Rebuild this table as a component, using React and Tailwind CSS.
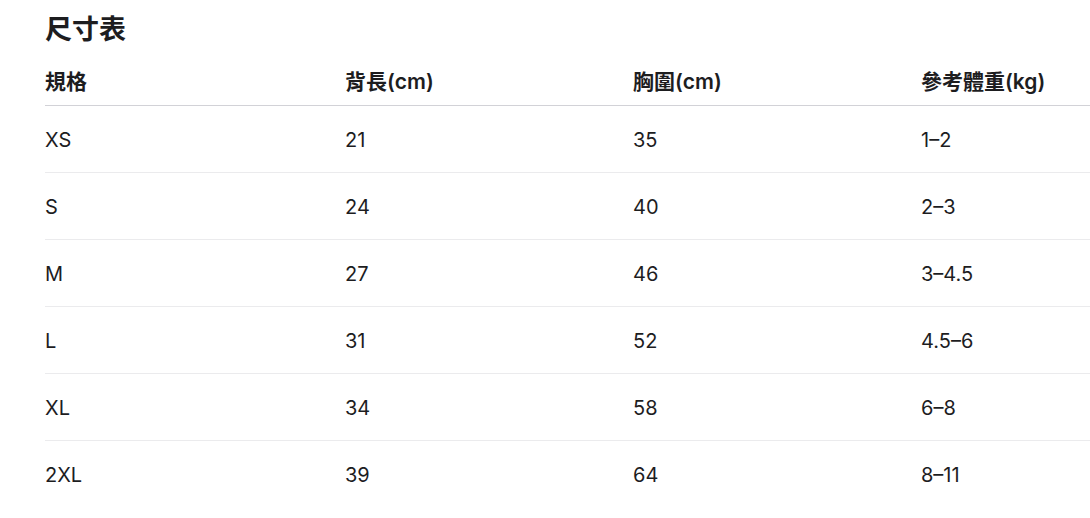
const rows = [
  ['XS', '21', '35', '1–2'],
  ['S', '24', '40', '2–3'],
  ['M', '27', '46', '3–4.5'],
  ['L', '31', '52', '4.5–6'],
  ['XL', '34', '58', '6–8'],
  ['2XL', '39', '64', '8–11'],
];

export default function App() {
  return (
    <div className="w-[1090px] h-[518px] overflow-hidden bg-white text-[#1d1d1f] font-['Inter','Noto_Sans_CJK_TC',sans-serif]">
      <div className="pl-[45px] pt-[13px]">
        <h2 className="text-[27px] font-bold leading-[34px]">尺寸表</h2>
        <table className="w-[1164px] mt-[14px] table-fixed border-collapse text-left text-[20px]">
          <colgroup>
            <col className="w-[300px]" />
            <col className="w-[288px]" />
            <col className="w-[288px]" />
            <col className="w-[288px]" />
          </colgroup>
          <thead>
            <tr className="border-b border-[#d2d2d7] text-[21px]">
              <th className="h-[44px] pb-[3px] font-semibold">規格</th>
              <th className="h-[44px] pb-[3px] font-semibold">背長(cm)</th>
              <th className="h-[44px] pb-[3px] font-semibold">胸圍(cm)</th>
              <th className="h-[44px] pb-[3px] font-semibold">參考體重(kg)</th>
            </tr>
          </thead>
          <tbody>
            {rows.map((r, i) => (
              <tr key={r[0]} className={i < rows.length - 1 ? 'border-b border-[#ebebed]' : ''}>
                {r.map((c, j) => (
                  <td key={j} className="h-[67px] pt-[3px] font-normal">{c}</td>
                ))}
              </tr>
            ))}
          </tbody>
        </table>
      </div>
    </div>
  );
}
